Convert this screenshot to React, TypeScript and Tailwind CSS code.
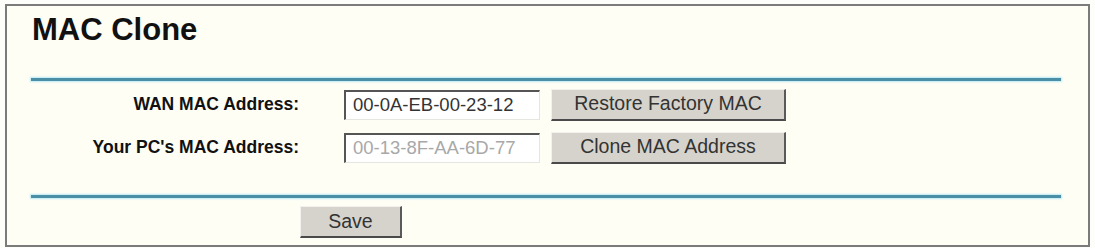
import React from 'react';

const font = { fontFamily: '"Liberation Sans", Arial, sans-serif' };

function Rule() {
  return <div className="ml-[24px] mr-[27px] h-[3px] bg-[#4a8fa5] shadow-[0_0_2px_1px_#b9e9f3]" />;
}

function Button({ label, className }: { label: string; className: string }) {
  return (
    <button
      className={`flex items-center justify-center bg-[#d6d3cc] text-[#333] border-t border-l border-t-[#f2f1ee] border-l-[#f2f1ee] border-r-2 border-b-2 border-r-[#5a5a5a] border-b-[#4a4a4a] ${className}`}
    >
      {label}
    </button>
  );
}

function Row({ label, value, muted, button }: { label: string; value: string; muted?: boolean; button: string }) {
  return (
    <div className="flex items-center h-[33px]">
      <div className="w-[292px] text-right font-bold text-[17.5px] text-[#111]">{label}</div>
      <div
        className={`ml-[45px] w-[196px] h-[30px] flex items-center pl-[7px] bg-white border-t-2 border-l-2 border-t-[#555] border-l-[#555] border-r border-b border-r-[#e6e6e0] border-b-[#e6e6e0] text-[18.5px] ${muted ? 'text-[#a8a8a8]' : 'text-[#333]'}`}
      >
        {value}
      </div>
      <Button label={button} className="ml-[11px] w-[235px] h-[32px] text-[19.5px]" />
    </div>
  );
}

export default function App() {
  return (
    <div className="w-[1095px] h-[248px] bg-[#fdfdfa] pt-[4px] pl-[5px]" style={font}>
      <div className="w-[1085px] h-[243px] border-2 border-[#7b7b7b] bg-[#fffef5] flex flex-col">
        <h1 className="pl-[25px] pt-[7px] text-[31px] leading-[34px] font-bold text-[#111]">MAC Clone</h1>
        <div className="mt-[31px]">
          <Rule />
        </div>
        <div className="mt-[7px] flex flex-col gap-[10px]">
          <Row label="WAN MAC Address:" value="00-0A-EB-00-23-12" button="Restore Factory MAC" />
          <Row label="Your PC's MAC Address:" value="00-13-8F-AA-6D-77" muted button="Clone MAC Address" />
        </div>
        <div className="mt-[31px]">
          <Rule />
        </div>
        <div className="mt-[8px] pl-[293px]">
          <Button label="Save" className="w-[102px] h-[32px] text-[19.5px]" />
        </div>
      </div>
    </div>
  );
}
